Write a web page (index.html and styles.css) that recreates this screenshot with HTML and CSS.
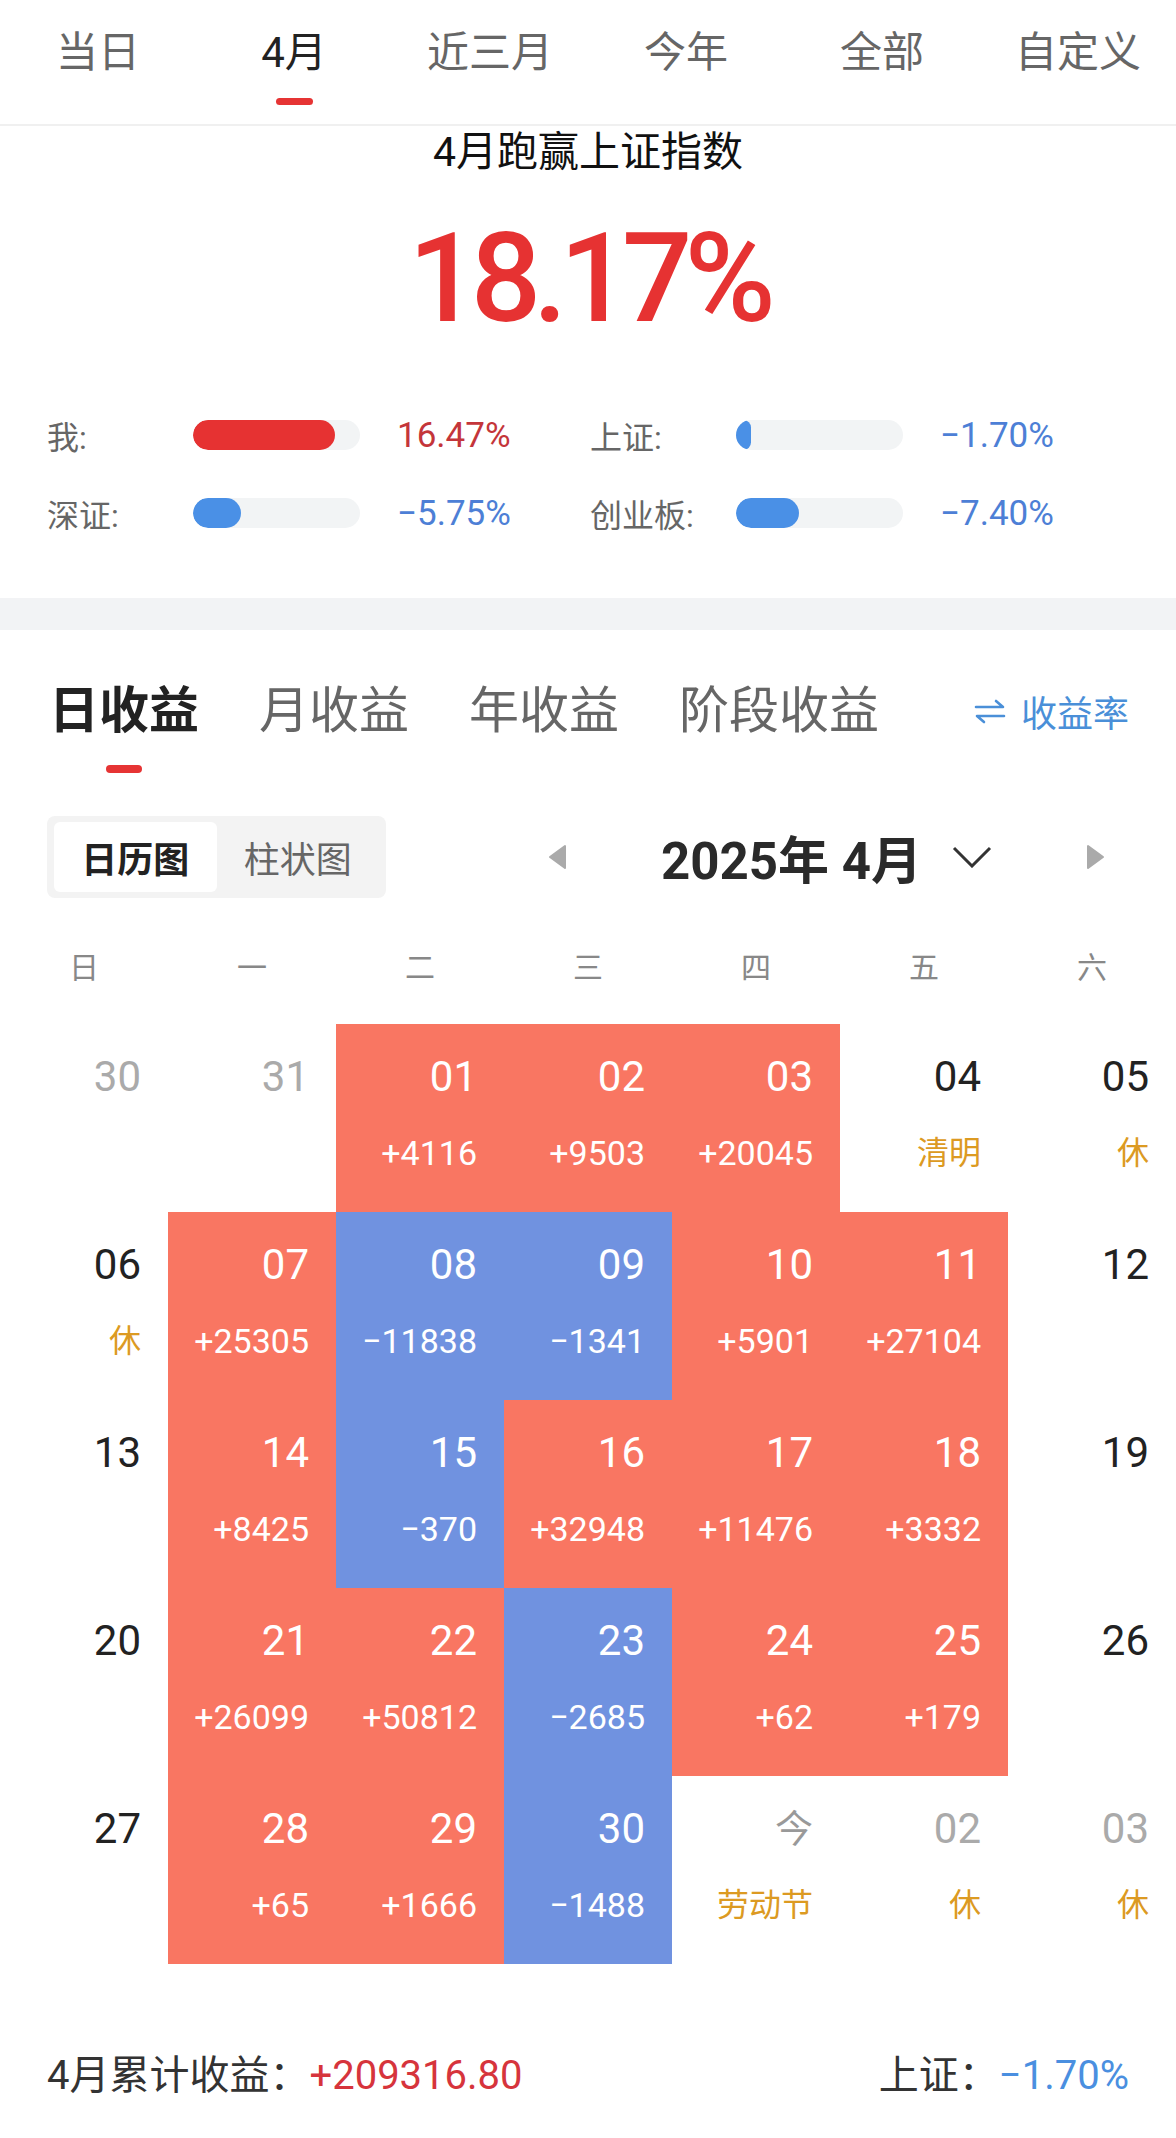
FILE: index.html
```html
<!DOCTYPE html>
<html lang="zh-CN">
<head>
  <meta charset="UTF-8" />
  <meta name="viewport" content="width=device-width, initial-scale=1.0"/>
  <title>收益日历</title>
  <link rel="stylesheet" href="styles.css">
</head>
<body>
  <header class="range-tabs">
    <div class="range-tab">当日</div>
    <div class="range-tab active">4月</div>
    <div class="range-tab">近三月</div>
    <div class="range-tab">今年</div>
    <div class="range-tab">全部</div>
    <div class="range-tab">自定义</div>
  </header>

  <section class="summary">
    <p class="summary-title">4月跑赢上证指数</p>
    <p class="summary-rate">18.17%</p>
    <div class="compare">
      <div class="compare-item">
        <span class="compare-label">我:</span>
        <span class="track"><span class="fill up" style="width:85%"></span></span>
        <span class="compare-value up">16.47%</span>
      </div>
      <div class="compare-item">
        <span class="compare-label">上证:</span>
        <span class="track"><span class="fill down" style="width:9%"></span></span>
        <span class="compare-value down">−1.70%</span>
      </div>
      <div class="compare-item">
        <span class="compare-label">深证:</span>
        <span class="track"><span class="fill down" style="width:29%"></span></span>
        <span class="compare-value down">−5.75%</span>
      </div>
      <div class="compare-item">
        <span class="compare-label">创业板:</span>
        <span class="track"><span class="fill down" style="width:38%"></span></span>
        <span class="compare-value down">−7.40%</span>
      </div>
    </div>
  </section>

  <div class="band"></div>

  <section class="profit">
    <div class="profit-tabs">
      <div class="profit-tab active">日收益</div>
      <div class="profit-tab">月收益</div>
      <div class="profit-tab">年收益</div>
      <div class="profit-tab">阶段收益</div>
      <div class="rate-switch">
        <svg width="34" height="26" viewBox="0 0 34 26"><path d="M3 9 H30 L23 3 M31 18 H4 L11 24" fill="none" stroke="#4a8fd8" stroke-width="2.6" stroke-linecap="round" stroke-linejoin="round"/></svg>
        <span>收益率</span>
      </div>
    </div>

    <div class="toolbar">
      <div class="view-toggle">
        <span class="view-option active">日历图</span>
        <span class="view-option">柱状图</span>
      </div>
      <div class="month-nav">
        <svg width="20" height="26" viewBox="0 0 20 26"><polygon points="18,2 18,24 3,13" fill="#aaa" stroke="#aaa" stroke-width="2" stroke-linejoin="round"/></svg>
        <div class="month-title">
          <span>2025年 4月</span>
          <svg width="40" height="22" viewBox="0 0 40 22"><polyline points="2,2 20,20 38,2" fill="none" stroke="#333" stroke-width="3"/></svg>
        </div>
        <svg width="20" height="26" viewBox="0 0 20 26"><polygon points="2,2 2,24 17,13" fill="#aaa" stroke="#aaa" stroke-width="2" stroke-linejoin="round"/></svg>
      </div>
    </div>

    <div class="weekdays">
      <span>日</span><span>一</span><span>二</span><span>三</span><span>四</span><span>五</span><span>六</span>
    </div>

    <div class="calendar">
      <div class="day muted"><b>30</b></div>
      <div class="day muted"><b>31</b></div>
      <div class="day up"><b>01</b><i>+4116</i></div>
      <div class="day up"><b>02</b><i>+9503</i></div>
      <div class="day up"><b>03</b><i>+20045</i></div>
      <div class="day"><b>04</b><i class="holiday">清明</i></div>
      <div class="day"><b>05</b><i class="holiday">休</i></div>

      <div class="day"><b>06</b><i class="holiday">休</i></div>
      <div class="day up"><b>07</b><i>+25305</i></div>
      <div class="day down"><b>08</b><i>−11838</i></div>
      <div class="day down"><b>09</b><i>−1341</i></div>
      <div class="day up"><b>10</b><i>+5901</i></div>
      <div class="day up"><b>11</b><i>+27104</i></div>
      <div class="day"><b>12</b></div>

      <div class="day"><b>13</b></div>
      <div class="day up"><b>14</b><i>+8425</i></div>
      <div class="day down"><b>15</b><i>−370</i></div>
      <div class="day up"><b>16</b><i>+32948</i></div>
      <div class="day up"><b>17</b><i>+11476</i></div>
      <div class="day up"><b>18</b><i>+3332</i></div>
      <div class="day"><b>19</b></div>

      <div class="day"><b>20</b></div>
      <div class="day up"><b>21</b><i>+26099</i></div>
      <div class="day up"><b>22</b><i>+50812</i></div>
      <div class="day down"><b>23</b><i>−2685</i></div>
      <div class="day up"><b>24</b><i>+62</i></div>
      <div class="day up"><b>25</b><i>+179</i></div>
      <div class="day"><b>26</b></div>

      <div class="day"><b>27</b></div>
      <div class="day up"><b>28</b><i>+65</i></div>
      <div class="day up"><b>29</b><i>+1666</i></div>
      <div class="day down"><b>30</b><i>−1488</i></div>
      <div class="day today"><b>今</b><i class="holiday">劳动节</i></div>
      <div class="day muted"><b>02</b><i class="holiday">休</i></div>
      <div class="day muted"><b>03</b><i class="holiday">休</i></div>
    </div>

    <footer class="total">
      <p>4月累计收益：<span class="up-text">+209316.80</span></p>
      <p>上证：<span class="down-text">−1.70%</span></p>
    </footer>
  </section>
</body>
</html>
```

FILE: styles.css
```css
body { margin: 0; font-family: Roboto, "Noto Sans CJK SC", sans-serif; background: #fff; color: #222; }
p { margin: 0; }

.range-tabs { display: grid; grid-template-columns: repeat(6, 1fr); height: 124px; border-bottom: 2px solid #f0f0f0; }
.range-tab { display: flex; flex-direction: column; align-items: center; padding-top: 32px; font-size: 42px; line-height: 42px; color: #666; }
.range-tab.active { color: #222; }
.range-tab.active::after { content: ""; width: 37px; height: 7px; margin-top: 24px; border-radius: 4px; background: #e63434; }

.summary { padding-bottom: 65px; }
.summary-title { margin-top: 6px; text-align: center; font-size: 41px; line-height: 40px; color: #111; }
.summary-rate { margin-top: 45px; text-align: center; font-size: 124px; line-height: 124px; font-weight: 500; letter-spacing: -8px; color: #e63232; }
.compare { display: grid; grid-template-columns: 543px 543px; row-gap: 38px; margin-top: 74px; padding-left: 47px; }
.compare-item { display: flex; align-items: center; height: 40px; }
.compare-label { width: 146px; font-size: 32px; color: #666; }
.track { width: 167px; height: 30px; border-radius: 15px; background: #f2f4f5; overflow: hidden; }
.fill { display: block; height: 100%; min-width: 15px; border-radius: 15px; }
.fill.up { background: #e63232; }
.fill.down { background: #4a90e6; }
.compare-value { margin-left: 37px; font-size: 35px; }
.compare-value.up { color: #c4353a; }
.compare-value.down { color: #4d7fd6; }

.band { height: 32px; background: #f2f3f5; }

.profit-tabs { display: flex; align-items: center; gap: 60px; padding: 55px 47px 0 49px; }
.profit-tab { display: flex; flex-direction: column; align-items: center; font-size: 50px; line-height: 50px; color: #666; }
.profit-tab.active { color: #222; font-weight: bold; }
.profit-tab::after { content: ""; width: 36px; height: 8px; margin-top: 29px; border-radius: 4px; }
.profit-tab.active::after { background: #e63434; }
.rate-switch { display: flex; align-items: center; gap: 14px; margin-left: auto; margin-bottom: 37px; font-size: 36px; color: #4a8fd8; }

.toolbar { display: flex; align-items: center; margin-top: 42px; padding: 0 47px; }
.view-toggle { display: flex; width: 339px; height: 82px; box-sizing: border-box; padding: 6px 7px; background: #f3f3f3; border-radius: 8px; }
.view-option { flex: 1; display: flex; align-items: center; justify-content: center; font-size: 36px; color: #666; border-radius: 6px; }
.view-option.active { background: #fff; color: #222; font-weight: bold; }
.month-nav { display: flex; align-items: center; justify-content: space-between; width: 559px; margin-left: 161px; }
.month-title { display: flex; align-items: center; gap: 30px; font-size: 51px; font-weight: bold; color: #2a2a2a; }

.weekdays { display: grid; grid-template-columns: repeat(7, 1fr); margin-top: 55px; font-size: 30px; line-height: 30px; color: #888; text-align: center; }

.calendar { display: grid; grid-template-columns: repeat(7, 168px); grid-auto-rows: 188px; margin-top: 41px; }
.day { display: flex; flex-direction: column; align-items: flex-end; padding: 32px 27px 0 0; color: #222; }
.day b { font-weight: normal; font-size: 42px; line-height: 42px; }
.day i { font-style: normal; margin-top: 38px; font-size: 34px; line-height: 34px; }
.day.up { background: #f97662; color: #fff; }
.day.down { background: #7092e0; color: #fff; }
.day.muted b { color: #aaa; }
.day.today b { color: #999; font-size: 38px; }
.day .holiday { color: #dc9a22; font-size: 32px; }

.total { display: flex; justify-content: space-between; margin-top: 92px; padding: 0 47px; font-size: 40px; line-height: 40px; color: #333; }
.up-text { color: #d6343c; }
.down-text { color: #4a8fe0; }
```
